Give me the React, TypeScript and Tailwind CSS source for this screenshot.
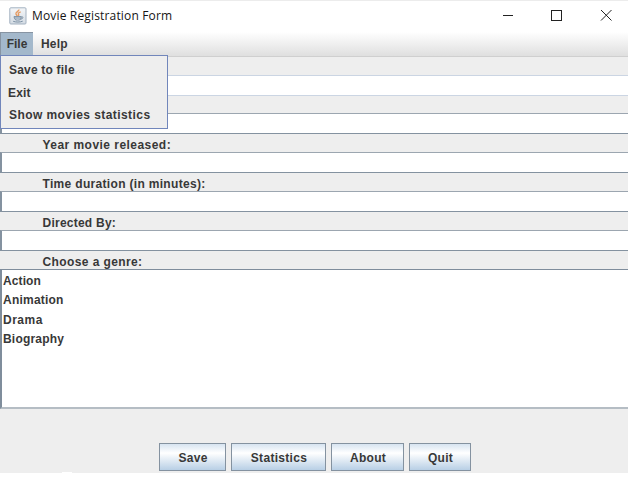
import React from 'react';

const fields = [
  { label: 'Year movie released:', spacing: 'tracking-[0.46px]' },
  { label: 'Time duration (in minutes):', spacing: 'tracking-[0.32px]' },
  { label: 'Directed By:', spacing: 'tracking-[0.24px]' },
];

const buttons = [
  { label: 'Save', width: 'w-[67px]' },
  { label: 'Statistics', width: 'w-[95px]' },
  { label: 'About', width: 'w-[73px]' },
  { label: 'Quit', width: 'w-[62px]' },
];

const genres = [
  { label: 'Action', spacing: 'tracking-[0.1px]' },
  { label: 'Animation', spacing: 'tracking-[0.22px]' },
  { label: 'Drama', spacing: 'tracking-[0.5px]' },
  { label: 'Biography', spacing: 'tracking-[0.2px]' },
];

function JavaIcon() {
  return (
    <svg width="18" height="18" viewBox="0 0 18 18" fill="none">
      <defs>
        <linearGradient id="tile" x1="0" y1="0" x2="0" y2="1">
          <stop offset="0" stopColor="#f4f6f8" />
          <stop offset="1" stopColor="#d3dbe3" />
        </linearGradient>
      </defs>
      <rect x="0.8" y="0.8" width="16.2" height="16.2" rx="1" fill="url(#tile)" stroke="#a3b1c0" />
      <path d="M9.8 2.5C10.4 4.3 6 5.2 7 7.1L8.3 9M11.7 4.8C9.3 5.7 8.8 6.6 9.7 7.6L9.4 9" stroke="#e59a61" strokeWidth="1.4" />
      <path d="M5 9.6h7v1.6c0 1.2-1 1.9-3.5 1.9S5.5 12.4 5 9.6ZM12 10c3-1 2.4 2.2-.7 2.1" stroke="#7b90a4" strokeWidth="1" />
      <path d="M5.5 11h6M4.2 14.3c2.5 1 6.8 1 9.5-.1" stroke="#7b90a4" strokeWidth="1" />
    </svg>
  );
}

function Input() {
  return <input className="block h-[21px] w-full border-y border-l-2 border-[#8492a0] border-t-[#9ca6b0] bg-white outline-none" />;
}

export default function App() {
  return (
    <div className="h-[477px] w-[628px] overflow-hidden bg-white font-['Liberation_Sans',sans-serif] text-[12px] font-bold text-[#383838]">
      <div className="flex h-[473px] flex-col bg-[#eeeeee]">
        <header className="flex h-8 shrink-0 border-t border-[#ececec] bg-white pl-[9px]">
          <div className="pt-[6px]"><JavaIcon /></div>
          <h1 className="ml-[5px] pt-[6px] font-['Open_Sans',sans-serif] text-[12px] leading-[18px] font-normal tracking-[0.16px] whitespace-nowrap text-[#151515]">Movie Registration Form</h1>
          <svg className="ml-auto shrink-0" width="126" height="31" viewBox="502 1 126 31" fill="none" stroke="#222" shapeRendering="crispEdges">
            <path d="M503 15.5h10" />
            <path d="M551.5 10.5h10v10h-10z" />
            <path d="m601 10 10.5 10.5M611.5 10 601 20.5" shapeRendering="auto" />
          </svg>
        </header>
        <nav className="relative z-10 flex h-[25px] shrink-0 border-b border-[#cfcfcf] bg-linear-to-b from-white to-[#dfdfdf]">
          <button className="h-6 w-[33px] border-t border-l border-[#8794a2] bg-[#a3b8cb] text-center leading-[23px]">File</button>
          <button className="ml-2 h-6 leading-6 tracking-[0.2px]">Help</button>
          <div className="absolute top-[23px] left-0 h-[74px] w-[168px] border border-[#7186bb] bg-[#eeeeee] pt-[3px]">
            <div className="h-[23px] pl-2 leading-[23px] tracking-[0.2px]">Save to file</div>
            <div className="h-[22px] pl-[7px] leading-[23px] tracking-[0.2px]">Exit</div>
            <div className="h-[23px] pl-2 leading-[23px] tracking-[0.43px]">Show movies statistics</div>
          </div>
        </nav>
        <main className="shrink-0">
          <div className="h-[18px]" />
          <input className="block h-[21px] w-full border-y border-[#cbd5e3] bg-white outline-none" />
          <div className="h-[17px]" />
          <Input />
          {fields.map((f) => (
            <section key={f.label}>
              <label className={`block h-[18px] pl-[42.5px] leading-[22px] ${f.spacing}`}>{f.label}</label>
              <Input />
            </section>
          ))}
          <label className="block h-[18px] pl-[42.5px] leading-[22px] tracking-[0.4px]">Choose a genre:</label>
          <ul className="h-[140px] border-t border-b-2 border-l-2 border-[#7f8d9c] border-b-[#b5bdc4] bg-white pt-[2px] pl-px">
            {genres.map((g) => (
              <li key={g.label} className={`h-[19.3px] leading-[19px] ${g.spacing}`}>{g.label}</li>
            ))}
          </ul>
        </main>
        <footer className="mt-[34px] flex shrink-0 gap-[5px] pl-[159px]">
          {buttons.map((b) => (
            <button key={b.label} className={`h-7 ${b.width} border border-[#8492a0] bg-linear-to-b from-[#d7e4f1] via-white via-35% to-[#b8cfe5] pt-[2px] pl-px tracking-[0.3px]`}>{b.label}</button>
          ))}
        </footer>
      </div>
      <div className="relative -top-px ml-[62px] h-px w-[10px] bg-white" />
    </div>
  );
}
